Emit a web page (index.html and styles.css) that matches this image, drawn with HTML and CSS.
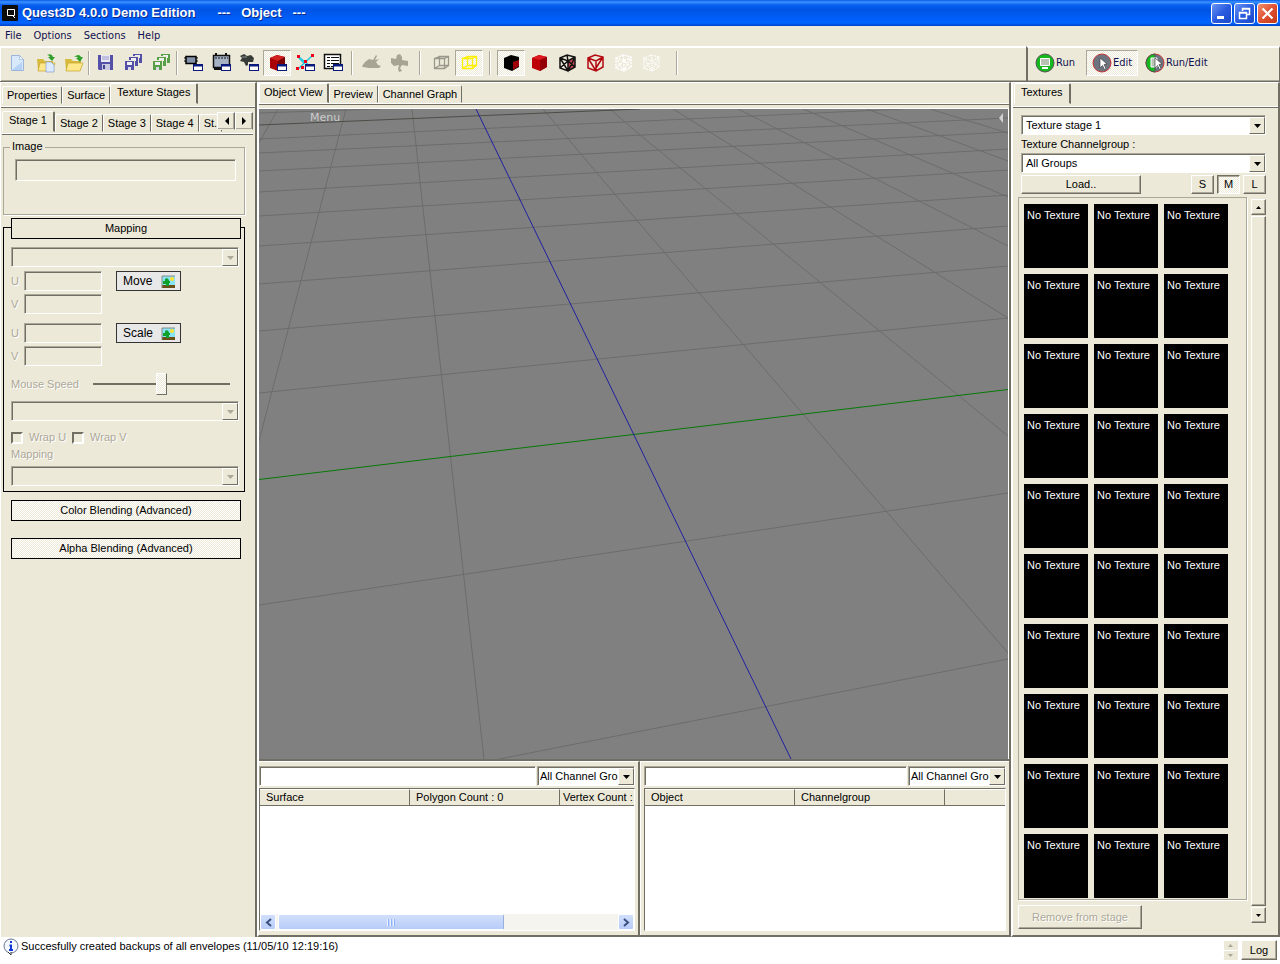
FILE: index.html
```html
<!DOCTYPE html>
<html lang="en">
<head>
<meta charset="utf-8">
<title>Quest3D 4.0.0 Demo Edition</title>
<link rel="stylesheet" href="styles.css">
</head>
<body>
<svg class="defs" aria-hidden="true">
  <defs>
    <g id="win"><rect x="10.500" y="12.500" width="9" height="6" fill="#fff" stroke="#0a1a7a"/><path d="M10 13.500h10" stroke="#0a1a7a" stroke-width="2"/></g>
    <g id="wire"><path d="M3.500 6.500h10v10h-10zM8.500 4.500h9v9h-9zM3.500 6.500l5-2M13.500 6.500l4-2M3.500 16.500l5-3M13.500 16.500l4-3" fill="none" stroke="currentColor" stroke-width="1.300"/></g>
    <g id="solid"><path d="M3 6l7-3 8 2v10l-7 4-8-3z" fill="currentColor"/></g>
    <g id="mesh"><path d="M3 6l7-3 8 2v10l-7 4-8-3zM3 6l8 3 7-4M11 9v10M3 6l8 13 7-14M3 16l8-7 7 6M10 3l1 6" fill="none" stroke="currentColor" stroke-width="1.500"/></g>
    <g id="floppy"><path d="M3 3h15v15H4l-1-1z" fill="#5450a8"/><path d="M6 3h9v7H6z" fill="#e8e8f4"/><path d="M7 5h7M7 7h7" stroke="#9a98c8"/><path d="M7 12h8v6H7z" fill="#c8c8e0"/><path d="M8 13h2v4H8z" fill="#444090"/></g>
    <g id="disk"><path d="M0 0h11v11H0z" fill="#ece9d8"/><path d="M1 1h9v9H1z" fill="currentColor"/><path d="M3 2h5v3H3z" fill="#eef0f4"/><path d="M4 7h3v3H4z" fill="#dcdce8"/></g>
    <g id="disks"><use href="#disk" x="9" y="1"/><use href="#disk" x="5" y="4"/><use href="#disk" x="1" y="8"/></g>
    <g id="folder"><path d="M2 7h6l2 2h8v9H3z" fill="#d8bb3c"/><path d="M5 11h15l-3 8H3z" fill="#ffe88a" stroke="#c6a52c" stroke-width=".7"/></g>
    <g id="cursor"><path d="M0 0l7 6-3 .5 2 4-1.500 1-2-4L0 10z" fill="#fff" stroke="#333" stroke-width=".6"/></g>
    <g id="picture"><path d="M1 2h13v12H1z" fill="#86e4f4"/><path d="M1 11h13v3H1z" fill="#6b4f16"/><path d="M5 12v-2H2V7h2V5l2-1 2 2v1h1v2H8v3z" fill="#10a02c"/><circle cx="11" cy="5" r="2" fill="#ffe02c"/><path d="M1 14V2h13" fill="none" stroke="#888"/></g>
  </defs>
</svg>

<div class="app">
  <header class="titlebar">
    <svg width="16" height="16" viewBox="0 0 16 16"><rect width="16" height="16" rx="1" fill="#0c0c0c"/><path d="M5.500 4.500h7v6h-7zM11 11l2 2" fill="none" stroke="#fff"/></svg>
    <h1>Quest3D 4.0.0 Demo Edition</h1>
    <span class="doc">---&nbsp;&nbsp; Object &nbsp;&nbsp;---</span>
    <div class="winbtns">
      <button type="button" aria-label="Minimize"><svg width="19" height="19"><path d="M5 13.500h7" stroke="#fff" stroke-width="3"/></svg></button>
      <button type="button" aria-label="Restore"><svg width="19" height="19"><path d="M7.500 7V4.500h7v6H12M7 5h8M4.500 8.500h7v6h-7zM4 9h8" fill="none" stroke="#fff" stroke-width="1.500"/></svg></button>
      <button type="button" class="close" aria-label="Close"><svg width="19" height="19"><path d="M4.500 4.500l10 10M14.500 4.500l-10 10" stroke="#fff" stroke-width="2.200"/></svg></button>
    </div>
  </header>

  <nav class="menubar">
    <button type="button">File</button><button type="button">Options</button><button type="button">Sections</button><button type="button">Help</button>
  </nav>

  <div class="toolbars">
    <div class="toolbar" role="toolbar" aria-label="Main">
      <button type="button" aria-label="New"><svg width="21" height="21"><path d="M4.500 3.500h8l4 4v11h-12z" fill="#d9e9fc" stroke="#9ab4dc"/><path d="M12.500 3.500l4 4h-4z" fill="#f8fbff" stroke="#9ab4dc" stroke-width=".7"/><path d="M6 17l9-7v8H6z" fill="#b6d2f6"/></svg></button>
      <button type="button" aria-label="Import"><svg width="21" height="21"><use href="#folder"/><path d="M12 3q5-2 6 2h2l-3 4-4-4h2q-1-2-3-2" fill="#2fa02c"/><path d="M11 10h5l3 3v7h-8z" fill="#dcebff" stroke="#86a0cc" stroke-width=".7"/></svg></button>
      <button type="button" aria-label="Open"><svg width="21" height="21"><use href="#folder"/><path d="M11 5q5-4 7 0h2l-3 5-4-4h2q-1-2-4-1" fill="#2fa02c"/></svg></button>
      <span class="sep s"></span>
      <button type="button" aria-label="Save"><svg width="21" height="21"><use href="#floppy"/></svg></button>
      <button type="button" aria-label="Save all"><svg width="21" height="21" color="#5450a8"><use href="#disks"/></svg></button>
      <button type="button" aria-label="Save pools"><svg width="21" height="21" color="#58a048"><use href="#disks"/></svg></button>
      <span class="sep s"></span>
      <button type="button" aria-label="Channels"><svg width="21" height="21"><path d="M3 4.500h10v7H3z" fill="#8493a8" stroke="#000" stroke-width="1.500"/><path d="M1 6h2M1 9h2M13 6h2M13 9h2" stroke="#000"/><use href="#win"/></svg></button>
      <button type="button" aria-label="Animation"><svg width="21" height="21"><path d="M2.500 3.500h16v12h-16z" fill="#a6b2c4" stroke="#111" stroke-width="1.500"/><path d="M4 6h13" stroke="#111" stroke-dasharray="2 1"/><path d="M5 1v2M15 1v2M3 17h7" stroke="#111" stroke-width="2"/><use href="#win"/></svg></button>
      <button type="button" aria-label="Camera"><svg width="21" height="21"><path d="M1 4l4-2 3 2 4-1 3 3-1 4H9v3l-2 1-2-4-4-1 2-3z" fill="#383c38"/><path d="M3 5h5" stroke="#8c908c"/><use href="#win"/></svg></button>
      <button type="button" class="on" aria-label="Object" aria-pressed="true"><svg width="21" height="21"><use href="#solid" color="#a80004"/><path d="M3 6l8 3 7-4-8-2z" fill="#d02020"/><path d="M11 9v10l7-4V5z" fill="#780004"/><use href="#win"/></svg></button>
      <button type="button" aria-label="Paths"><svg width="21" height="21"><path d="M3 17l15-14M4 5l11 9M4 6l5 5" stroke="#20c8e0" stroke-width="1.500"/><path d="M2 3h3v3H2zM16 2h3v3h-3zM1 15h3v3H1zM9 8h3v3H9zM6 14h3v3H6z" fill="#f00018"/><use href="#win"/></svg></button>
      <button type="button" aria-label="List"><svg width="21" height="21"><path d="M1.500 2.500h16v14h-16z" fill="#fff" stroke="#111" stroke-width="1.500"/><path d="M4 5.500h12M4 8.500h12M4 11.500h12M4 14.500h12" stroke="#111" stroke-dasharray="3 1 8 1"/><use href="#win"/></svg></button>
      <span class="sep m"></span>
      <button type="button" aria-label="Walk" disabled><svg width="21" height="21"><path d="M1 14l3-4 4-3 4 1 3-5 1 1-2 4 4-1-3 3 2 3 3 1-2 2H8l-6-1z" fill="#a7a493"/></svg></button>
      <button type="button" aria-label="Orbit" disabled><svg width="21" height="21"><path d="M2 6l5 1 1-4 3-1 2 3v3l6 1v5l-6-1-2 3 2 3-3 1-1-3 1-4-5 1-3-3z" fill="#a7a493"/></svg></button>
      <span class="sep l"></span>
      <button type="button" aria-label="Bounding box"><svg width="21" height="21" color="#9a978b"><use href="#wire"/></svg></button>
      <button type="button" class="on" aria-label="Selection box" aria-pressed="true"><svg width="21" height="21" color="#fff000"><use href="#wire"/></svg></button>
      <span class="sep l"></span>
      <button type="button" class="on" aria-label="Shaded" aria-pressed="true"><svg width="21" height="21"><use href="#solid" color="#000"/><path d="M12 10v8l6-4V8z" fill="#a00008"/></svg></button>
      <button type="button" aria-label="Solid"><svg width="21" height="21"><use href="#solid" color="#bc0006"/><path d="M3 6l8 2 7-3-8-2z" fill="#de1820"/><path d="M11 8v11l7-4V5z" fill="#940008"/></svg></button>
      <button type="button" aria-label="Shaded mesh"><svg width="21" height="21" color="#111"><path d="M11 9l7-4v10l-7 4z" fill="#c64850"/><use href="#mesh"/></svg></button>
      <button type="button" aria-label="Mesh"><svg width="21" height="21"><path d="M3 6l7-3 8 2v10l-7 4-8-3zM3 6l8 3 7-4M11 9v10M3 6l8 13M18 5l-7 11" fill="none" stroke="#b40810" stroke-width="1.500"/></svg></button>
      <button type="button" aria-label="Points" disabled><svg width="21" height="21" color="#fff"><use href="#mesh" stroke-dasharray="2 1"/></svg></button>
      <button type="button" aria-label="Vertices" disabled><svg width="21" height="21" color="#fff"><use href="#mesh" stroke-dasharray="1 1"/></svg></button>
      <span class="sep xl"></span>
    </div>
    <div class="toolbar modes" role="toolbar" aria-label="Mode">
      <button type="button"><svg width="20" height="20"><circle cx="10" cy="10" r="9" fill="#14b81c" stroke="#555"/><path d="M5.500 5.500h9v7h-9z" fill="#b7c2b4" stroke="#fff"/><path d="M7 15h6" stroke="#fff" stroke-width="2"/></svg>Run</button>
      <button type="button" class="on" aria-pressed="true"><svg width="20" height="20"><circle cx="10" cy="10" r="9" fill="#6d7480" stroke="#c83434"/><use href="#cursor" x="8" y="5"/></svg>Edit</button>
      <button type="button"><svg width="20" height="20"><circle cx="10" cy="10" r="9" fill="#6d7480" stroke="#c83434"/><path d="M10 1a9 9 0 0 0 0 18z" fill="#14b81c" stroke="#555"/><path d="M6 5h6v9H6z" fill="#b7c2b4" stroke="#fff"/><use href="#cursor" x="10" y="5"/></svg>Run/Edit</button>
    </div>
  </div>

  <main class="workspace">
    <aside class="left">
      <div class="tabs" role="tablist">
        <button type="button" role="tab">Properties</button><button type="button" role="tab">Surface</button><button type="button" role="tab" aria-selected="true">Texture Stages</button>
      </div>
      <div class="tabs stages" role="tablist">
        <button type="button" role="tab" aria-selected="true">Stage 1</button><button type="button" role="tab">Stage 2</button><button type="button" role="tab">Stage 3</button><button type="button" role="tab">Stage 4</button><button type="button" role="tab">St.</button>
        <span class="scrollers"><button type="button" class="raised" aria-label="Previous stages"><svg width="5" height="8"><path d="M5 0v8L1 4z"/></svg></button><button type="button" class="raised" aria-label="Next stages"><svg width="5" height="8"><path d="M0 0v8l4-4z"/></svg></button></span>
      </div>
      <div class="stage">
        <fieldset class="image"><legend>Image</legend><input class="field" type="text" aria-label="Image" disabled></fieldset>
        <section class="mapping">
          <button type="button" class="bar open">Mapping</button>
          <div class="combo off"><select aria-label="Mapping type" disabled></select><span class="drop"><svg width="7" height="4"><path d="M0 0h7L3.500 4z"/></svg></span></div>
          <div class="uv">
            <label for="mu">U</label><input class="field" id="mu" type="text" disabled><button type="button" class="act">Move <svg width="15" height="15"><use href="#picture"/></svg></button>
            <label for="mv">V</label><input class="field" id="mv" type="text" disabled>
          </div>
          <div class="uv">
            <label for="su">U</label><input class="field" id="su" type="text" disabled><button type="button" class="act">Scale <svg width="15" height="15"><use href="#picture"/></svg></button>
            <label for="sv">V</label><input class="field" id="sv" type="text" disabled>
          </div>
          <div class="speed"><label for="speed">Mouse Speed</label><input type="range" id="speed" min="0" max="100" value="50" disabled></div>
          <div class="combo off"><select aria-label="Coordinates" disabled></select><span class="drop"><svg width="7" height="4"><path d="M0 0h7L3.500 4z"/></svg></span></div>
          <div class="wraps"><label><input type="checkbox" disabled>Wrap U</label><label><input type="checkbox" disabled>Wrap V</label></div>
          <label class="maplabel" for="map">Mapping</label>
          <div class="combo off"><select id="map" disabled></select><span class="drop"><svg width="7" height="4"><path d="M0 0h7L3.500 4z"/></svg></span></div>
        </section>
        <button type="button" class="bar">Color Blending (Advanced)</button>
        <button type="button" class="bar">Alpha Blending (Advanced)</button>
      </div>
    </aside>

    <section class="center">
      <div class="tabs" role="tablist">
        <button type="button" role="tab" aria-selected="true">Object View</button><button type="button" role="tab">Preview</button><button type="button" role="tab">Channel Graph</button>
      </div>
      <div class="viewport">
        <svg class="scene" viewBox="259 109 749 650" preserveAspectRatio="none">
          <g stroke="#6c6c6c" fill="none">
            <path d="M259 113L380 109M259 139L903 109M259 153L1008 118M259 171L1008 132M259 192L1008 149M259 216L1008 170M259 246L1008 195M259 284L1008 226M259 331L1008 266M259 393L1008 318M259 605L1008 493M499 759L1008 659"/>
            <path d="M278 109L259 143M346 109L259 441M412 109L484 759M543 109L640 224L1008 653M610 109L640 135L1008 436M673 109L1008 318M738 109L1008 246M803 109L1008 197M867 109L1008 161M930 109L1008 133"/>
          </g>
          <path d="M259 125L640 109" stroke="#4c4e48"/>
          <path d="M259 479.500L1008 389.500" stroke="#087808"/>
          <path d="M476 109L791 759" stroke="#2020a0"/>
        </svg>
        <button type="button" class="vmenu">Menu</button>
        <button type="button" class="vfold" aria-label="Show panel"><svg width="6" height="10"><path d="M5 0v10L1 5z" fill="#d0d0d0"/></svg></button>
      </div>
      <div class="panes">
        <div class="pane">
          <div class="filter"><input class="field" type="text" aria-label="Filter surfaces"><div class="combo"><select aria-label="Surface groups"><option>All Channel Groups</option></select><span class="drop"><svg width="7" height="4"><path d="M0 0h7L3.500 4z"/></svg></span></div></div>
          <div class="list">
            <table><colgroup><col class="c1"><col class="c1"><col></colgroup><thead><tr><th>Surface</th><th>Polygon Count : 0</th><th>Vertex Count :</th></tr></thead></table>
            <div class="hscroll"><button type="button" aria-label="Scroll left"><svg width="7" height="9"><path d="M6 1L2 4.500 6 8" fill="none" stroke="#3c5080" stroke-width="2"/></svg></button><span class="thumb"><svg width="8" height="7"><path d="M.5 0v7M3.500 0v7M6.500 0v7" stroke="#eef4fe"/><path d="M1.500 0v7M4.500 0v7M7.500 0v7" stroke="#8cb0f8"/></svg></span><button type="button" aria-label="Scroll right"><svg width="7" height="9"><path d="M1 1l4 3.500L1 8" fill="none" stroke="#3c5080" stroke-width="2"/></svg></button></div>
          </div>
        </div>
        <div class="pane">
          <div class="filter"><input class="field" type="text" aria-label="Filter objects"><div class="combo"><select aria-label="Object groups"><option>All Channel Groups</option></select><span class="drop"><svg width="7" height="4"><path d="M0 0h7L3.500 4z"/></svg></span></div></div>
          <div class="list">
            <table><colgroup><col class="c1"><col class="c1"><col></colgroup><thead><tr><th>Object</th><th>Channelgroup</th><th></th></tr></thead></table>
          </div>
        </div>
      </div>
    </section>

    <aside class="right">
      <div class="tabs" role="tablist"><button type="button" role="tab" aria-selected="true">Textures</button></div>
      <div class="textures">
        <div class="combo"><select aria-label="Texture stage"><option>Texture stage 1</option></select><span class="drop"><svg width="7" height="4"><path d="M0 0h7L3.500 4z"/></svg></span></div>
        <label class="tcg" for="tcg">Texture Channelgroup :</label>
        <div class="combo"><select id="tcg"><option>All Groups</option></select><span class="drop"><svg width="7" height="4"><path d="M0 0h7L3.500 4z"/></svg></span></div>
        <div class="sizes"><button type="button" class="raised load">Load..</button><button type="button" class="raised">S</button><button type="button" class="raised on" aria-pressed="true">M</button><button type="button" class="raised">L</button></div>
        <div class="browser">
          <div class="bcol">
            <ul class="tiles">
              <li>No Texture</li><li>No Texture</li><li>No Texture</li>
              <li>No Texture</li><li>No Texture</li><li>No Texture</li>
              <li>No Texture</li><li>No Texture</li><li>No Texture</li>
              <li>No Texture</li><li>No Texture</li><li>No Texture</li>
              <li>No Texture</li><li>No Texture</li><li>No Texture</li>
              <li>No Texture</li><li>No Texture</li><li>No Texture</li>
              <li>No Texture</li><li>No Texture</li><li>No Texture</li>
              <li>No Texture</li><li>No Texture</li><li>No Texture</li>
              <li>No Texture</li><li>No Texture</li><li>No Texture</li>
              <li>No Texture</li><li>No Texture</li><li>No Texture</li>
            </ul>
            <button type="button" class="raised remove" disabled>Remove from stage</button>
          </div>
          <div class="vscroll"><button type="button" class="raised" aria-label="Scroll up"><svg width="5" height="3"><path d="M0 3h5L2.500 0z"/></svg></button><span class="raised thumb"></span><button type="button" class="raised" aria-label="Scroll down"><svg width="5" height="3"><path d="M0 0h5L2.500 3z"/></svg></button></div>
        </div>
      </div>
    </aside>
  </main>

  <footer class="status">
    <svg width="18" height="18"><circle cx="9" cy="8" r="7" fill="#f4f8ff" stroke="#6a7890"/><path d="M6 14l3 3v-3" fill="#f4f8ff" stroke="#333"/><path d="M9 3v2M7.500 7.500H9V12M7 12h4" stroke="#1238d8" stroke-width="2" fill="none"/></svg>
    <output>Succesfully created backups of all envelopes (11/05/10 12:19:16)</output>
    <span class="spin"><button type="button" class="raised" aria-label="Previous message" disabled><svg width="5" height="3"><path d="M0 3h5L2.500 0z"/></svg></button><button type="button" class="raised" aria-label="Next message" disabled><svg width="5" height="3"><path d="M0 0h5L2.500 3z"/></svg></button></span>
    <button type="button" class="raised log">Log</button>
  </footer>
</div>
</body>
</html>
```
FILE: styles.css
```css
:root {
  --face: #ece9d8;
  --shadow: #aca899;
  --dark: #716f64;
  --dither: repeating-conic-gradient(#fff 0 25%, #ece9d8 0 50%) 0 0 / 2px 2px;
  --ui: "DejaVu Sans Condensed", "DejaVu Sans", "Noto Sans", sans-serif;
}
* { box-sizing: border-box; }
body {
  margin: 0;
  background: var(--face);
  color: #000;
  font: 11px/13px "Liberation Sans", Arial, sans-serif;
}
button, input, select { font: inherit; color: inherit; margin: 0; }
button { background: none; border: 0; padding: 0; white-space: nowrap; }
svg { display: block; flex: none; }
.defs { position: absolute; width: 0; height: 0; }
.app { display: flex; flex-direction: column; min-height: 100vh; }

.titlebar {
  display: flex;
  align-items: center;
  height: 26px;
  padding: 0 2px;
  color: #fff;
  font: bold 13px/16px "Liberation Sans", Arial, sans-serif;
  text-shadow: 1px 1px #0a2a8c;
  background: linear-gradient(#0a5ce8 0, #3c92ff 2px, #0860f0 5px, #0054e4 10px, #0060fc 20px, #0066ff 23px, #0040c8 26px);
}
.titlebar h1 { font: inherit; margin: 0 22px 0 4px; }
.winbtns { display: flex; gap: 2px; margin-left: auto; }
.winbtns button {
  width: 21px;
  height: 21px;
  border: 1px solid #fff;
  border-radius: 3px;
  background: linear-gradient(135deg, #6a94f4, #2a5ce0 50%, #1a48c8);
}
.winbtns .close { background: linear-gradient(135deg, #f09070, #e05030 50%, #c03818); }

.menubar {
  display: flex;
  gap: 12px;
  height: 20px;
  padding: 0 5px 2px;
  font-family: var(--ui);
}
.menubar button { color: #101050; }

.toolbars { display: flex; height: 36px; border-bottom: 1px solid var(--dark); box-shadow: inset 0 -1px var(--shadow); }
.toolbar {
  display: flex;
  align-items: center;
  flex: 1;
  padding: 0 0 4px 2px;
  border-top: 2px solid #fff;
  border-left: 1px solid #fff;
}
.toolbar button {
  display: flex;
  align-items: center;
  justify-content: center;
  width: 28px;
  height: 26px;
  border: 1px solid transparent;
}
.toolbar .on { background: var(--dither); border-color: var(--shadow) #fff #fff var(--shadow); }
.sep { width: 2px; height: 24px; border-left: 1px solid var(--shadow); border-right: 1px solid #fff; }
.sep.s { margin: 0 1px; }
.sep.m { margin: 0 4px; }
.sep.l { margin: 0 6px; }
.sep.xl { margin: 0 11px; }
.toolbar.modes {
  flex: 0 0 254px;
  gap: 5px;
  padding-left: 5px;
  border-left: 2px solid var(--dark);
  border-right: 1px solid var(--dark);
  font-family: var(--ui);
  color: #101050;
}
.toolbar.modes button { gap: 1px; width: auto; padding: 0 5px 0 1px; }
.toolbar.modes button.on { padding: 0 5px; }

.workspace {
  display: grid;
  grid-template-columns: 257px minmax(0, 1fr) 269px;
  flex: 1;
}
.workspace > * { display: flex; flex-direction: column; min-width: 0; border-top: 1px solid #fff; }
.left { border-right: 2px solid var(--dark); border-left: 1px solid #fff; }
.right { border-left: 2px solid #fff; border-right: 2px solid var(--dark); border-bottom: 2px solid var(--dark); }
.center { border-left: 2px solid #fff; border-right: 2px solid var(--dark); border-bottom: 2px solid var(--dark); }

.tabs {
  display: flex;
  align-items: flex-end;
  height: 25px;
  padding: 0 0 3px 1px;
  border-bottom: 1px solid var(--dark);
  box-shadow: inset 0 -1px #fff;
}
.tabs button {
  height: 18px;
  padding: 0 4px;
  border: solid;
  border-width: 1px;
  border-color: #fff var(--dark) transparent #fff;
  border-radius: 2px 2px 0 0;
}
.tabs button[aria-selected="true"] { height: 21px; padding: 0 6px 2px; border-right-width: 2px; }
.center .tabs { height: 22px; padding: 0 0 1px; }
.center .tabs button[aria-selected="true"] { height: 20px; padding: 0 4px 1px; }
.tabs.stages { position: relative; height: 27px; margin: 0 2px 0 1px; padding: 0 0 2px; overflow: hidden; }
.scrollers { position: absolute; right: 0; top: 4px; display: flex; background: var(--face); }
.tabs .scrollers button { display: grid; place-items: center; width: 18px; height: 18px; padding: 0; border-radius: 0; }

.raised {
  display: grid;
  place-items: center;
  background: var(--face);
  border: 1px solid;
  border-color: #fff var(--dark) var(--dark) #fff;
  box-shadow: inset -1px -1px var(--shadow);
}
.raised.on { background: var(--dither); border-color: var(--dark) #fff #fff var(--dark); box-shadow: inset 1px 1px var(--shadow); }
.raised:disabled { color: var(--shadow); fill: var(--shadow); text-shadow: 1px 1px #fff; }

.field, .combo {
  border: 1px solid;
  border-color: var(--shadow) #fff #fff var(--shadow);
  box-shadow: inset 1px 1px var(--dark);
  background: #fff;
  border-radius: 0;
  outline: 0;
  height: 20px;
  min-width: 0;
}
.field:disabled, .combo.off { background: var(--face); }
.combo { position: relative; overflow: hidden; }
.combo select {
  display: block;
  width: 100%;
  height: 18px;
  padding: 0 17px 0 4px;
  border: 0;
  background: none;
  appearance: none;
  outline: 0;
}
.drop {
  position: absolute;
  top: 1px;
  right: 0;
  bottom: 0;
  width: 16px;
  display: grid;
  place-items: center;
  pointer-events: none;
  background: var(--face);
  border: 1px solid;
  border-color: #fff var(--dark) var(--dark) #fff;
}
.off .drop { fill: var(--shadow); }

.stage { display: flex; flex-direction: column; padding: 5px 10px 0 2px; }
.image { height: 75px; margin: 0; padding: 5px 8px 0 11px; border: 1px solid var(--shadow); box-shadow: 1px 1px #fff; }
.image legend { padding: 0 2px; margin-left: -5px; height: 14px; }
.image .field { display: block; width: 100%; height: 22px; }
.mapping {
  display: flex;
  flex-direction: column;
  height: 265px;
  margin: 12px 0 8px;
  padding: 0 7px;
  border: 1px solid #000;
  color: var(--shadow);
  text-shadow: 1px 1px #fff;
}
.bar { height: 21px; margin: 0 4px 17px 8px; border: 1px solid #000; background: var(--dither); color: #000; }
.bar.open { flex: none; margin: -10px -4px 8px 0; background: var(--face); text-shadow: none; }
.mapping .combo { flex: none; margin-right: -2px; }
.uv {
  display: grid;
  grid-template-columns: 13px 78px 65px;
  grid-auto-rows: 20px;
  row-gap: 3px;
  align-items: center;
  margin: 4px 0 5px;
}
.uv + .uv { margin-top: 4px; }
.uv label { grid-column: 1; }
.act {
  display: flex;
  align-items: center;
  justify-content: space-between;
  height: 20px;
  padding: 0 4px 0 6px;
  margin-left: 14px;
  margin-right: -14px;
  border: 1px solid #333;
  background: #e8e8e8;
  color: #000;
  text-shadow: none;
  font-size: 12px;
}
.speed { display: flex; align-items: center; gap: 14px; height: 26px; margin-bottom: 4px; }
.speed input { flex: 1; min-width: 0; margin-right: 7px; height: 22px; appearance: none; background: linear-gradient(var(--dark), var(--dark)) center / 100% 2px no-repeat; }
.speed input::-webkit-slider-thumb {
  appearance: none;
  width: 11px;
  height: 22px;
  border: 1px solid;
  border-color: #fff var(--dark) var(--dark) #fff;
  background: var(--dither);
}
.wraps { display: flex; gap: 6px; margin: 10px 0 3px; }
.wraps label { display: flex; align-items: center; gap: 6px; }
.wraps input {
  appearance: none;
  width: 12px;
  height: 12px;
  border: 2px solid;
  border-color: var(--dark) #fff #fff var(--dark);
}
.maplabel { margin: 1px 0 5px; }

.viewport { position: relative; flex: 1; min-height: 300px; margin: 3px 0 0; border-top: 1px solid #fff; border-right: 1px solid #fff; background: #808080; }
.scene { position: absolute; inset: 0; width: 100%; height: 100%; }
.vmenu { position: absolute; left: 51px; top: 2px; color: #ccc; font: 11px/14px "DejaVu Sans", sans-serif; }
.vfold { position: absolute; right: 4px; top: 4px; }

.panes { display: grid; grid-template-columns: 381px minmax(0, 1fr); height: 176px; border-top: 2px solid var(--dark); }
.pane { display: flex; flex-direction: column; gap: 2px; min-width: 0; padding: 4px 3px 4px 0; border-top: 1px solid #fff; }
.pane + .pane { padding: 4px 3px 4px 3px; border-left: 1px solid #fff; }
.pane:first-child { border-right: 2px solid var(--dark); }
.filter { display: grid; grid-template-columns: minmax(0, 1fr) 98px; gap: 1px; }
.filter .combo select { padding: 0 15px 0 2px; }
.list { display: flex; flex-direction: column; flex: 1; overflow: hidden; background: #fff; border: 1px solid; border-color: var(--dark) #fff #fff var(--dark); }
.list table { width: 100%; table-layout: fixed; border-collapse: separate; border-spacing: 0; }
.list .c1 { width: 150px; }
.list th {
  height: 17px;
  padding: 0 0 0 6px;
  overflow: hidden;
  white-space: nowrap;
  text-align: left;
  font-weight: normal;
  background: var(--face);
  border-top: 1px solid #fff;
  border-right: 1px solid var(--dark);
  border-bottom: 1px solid var(--dark);
}
.list th:last-child { padding-left: 3px; border-right: 0; }
.hscroll { display: flex; gap: 2px; height: 16px; margin-top: auto; background: #f5f4ee; }
.hscroll button, .hscroll .thumb { display: grid; place-items: center; width: 16px; height: 16px; border: 1px solid #fff; border-radius: 2px; background: linear-gradient(#d0dffc, #b8ccf8); }
.hscroll .thumb { flex: 0 1 226px; border-right-color: #98b0e0; }
.hscroll button:last-child { margin-left: auto; }

.textures { display: flex; flex-direction: column; padding: 7px 12px 0 5px; }
.textures > .combo, .sizes { margin-left: 3px; }
.tcg { margin: 3px 0 2px 3px; }
.sizes { display: flex; gap: 3px; margin-top: 2px; }
.sizes button { width: 23px; height: 19px; }
.sizes .load { width: 120px; margin-right: auto; }
.browser { display: flex; gap: 4px; margin-top: 3px; }
.bcol { flex: 1; }
.tiles {
  display: grid;
  grid-template-columns: repeat(auto-fill, 64px);
  gap: 6px;
  margin: 0 0 5px;
  padding: 6px 5px 1px;
  list-style: none;
  border: 1px solid var(--shadow);
  box-shadow: 1px 1px #fff;
}
.tiles li { height: 64px; padding: 5px 0 0 3px; background: #000; color: #fff; white-space: nowrap; }
.remove { width: 124px; height: 24px; }
.vscroll { display: flex; flex-direction: column; gap: 1px; width: 15px; margin: 2px 0 6px; }
.vscroll button { height: 16px; }
.vscroll .thumb { flex: 1; }

.status { display: flex; align-items: flex-start; height: 27px; padding: 1px 3px 0 2px; background: #fff; }
.status output { flex: 1; padding: 2px 0 0 1px; }
.spin { display: grid; grid-template-rows: 10px 10px; margin: 2px 3px 0 0; width: 15px; }
.spin .raised { border-color: #fff var(--face) var(--face) #fff; box-shadow: none; }
.log { width: 36px; height: 20px; margin-top: 2px; }
```
